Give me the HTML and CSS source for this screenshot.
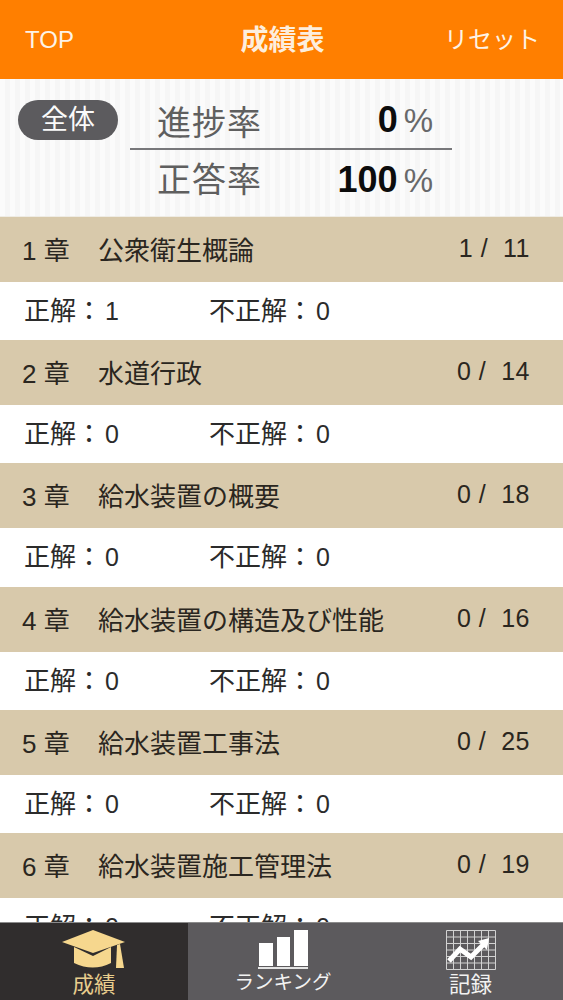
FILE: index.html
```html
<!DOCTYPE html>
<html lang="ja">
<head>
<meta charset="utf-8">
<title>成績表</title>
<link rel="stylesheet" href="styles.css">
</head>
<body>
<div class="app">
  <header class="top">
    <span class="top-left">TOP</span>
    <span class="top-title">成績表</span>
    <span class="top-right">リセット</span>
  </header>
  <section class="summary">
    <div class="pill">全体</div>
    <div class="stats">
      <div class="stat stat-a"><span class="stat-label">進捗率</span><span class="stat-val"><b>0</b><i>%</i></span></div>
      <div class="stat stat-b"><span class="stat-label">正答率</span><span class="stat-val"><b>100</b><i>%</i></span></div>
    </div>
  </section>
  <main class="list">
    <div class="chapter"><span class="no">1 章</span><span class="name">公衆衛生概論</span><span class="count">1 /&nbsp; 11</span></div>
    <div class="result"><span class="ok">正解：<span class="num">1</span></span><span class="ng">不正解：<span class="num">0</span></span></div>
    <div class="chapter"><span class="no">2 章</span><span class="name">水道行政</span><span class="count">0 /&nbsp; 14</span></div>
    <div class="result"><span class="ok">正解：<span class="num">0</span></span><span class="ng">不正解：<span class="num">0</span></span></div>
    <div class="chapter"><span class="no">3 章</span><span class="name">給水装置の概要</span><span class="count">0 /&nbsp; 18</span></div>
    <div class="result"><span class="ok">正解：<span class="num">0</span></span><span class="ng">不正解：<span class="num">0</span></span></div>
    <div class="chapter"><span class="no">4 章</span><span class="name">給水装置の構造及び性能</span><span class="count">0 /&nbsp; 16</span></div>
    <div class="result"><span class="ok">正解：<span class="num">0</span></span><span class="ng">不正解：<span class="num">0</span></span></div>
    <div class="chapter"><span class="no">5 章</span><span class="name">給水装置工事法</span><span class="count">0 /&nbsp; 25</span></div>
    <div class="result"><span class="ok">正解：<span class="num">0</span></span><span class="ng">不正解：<span class="num">0</span></span></div>
    <div class="chapter"><span class="no">6 章</span><span class="name">給水装置施工管理法</span><span class="count">0 /&nbsp; 19</span></div>
    <div class="result"><span class="ok">正解：<span class="num">0</span></span><span class="ng">不正解：<span class="num">0</span></span></div>
  </main>
  <nav class="tabs">
    <div class="tab tab-on">
      <svg class="ic" width="64" height="40" viewBox="0 0 64 40"><path d="M31 0 L63 12 L31 23 L0 12 Z" fill="#f6d78e"/><path d="M12 17 L31 26 L49 17 V33 Q31 42 12 33 Z" fill="#f6d78e"/><path d="M55 15 L58 14 L62 38 L54 38 Z" fill="#f6d78e"/></svg>
      <span>成績</span>
    </div>
    <div class="tab tab-mid">
      <svg class="ic" width="50" height="40" viewBox="0 0 50 40"><path d="M1 13 H15 V36 H1 Z M19 7 H32 V36 H19 Z M36 0 H50 V36 H36 Z" fill="#fff"/><path d="M0 37 H50 V39 H0 Z" fill="#e4e4e4"/></svg>
      <span class="tab-long">ランキング</span>
    </div>
    <div class="tab">
      <svg class="ic" width="50" height="40" viewBox="0 0 50 40"><path d="M.5.5H49.5V39.5H.5ZM.5 7H49.5M.5 13.500H49.5M.5 20H49.5M.5 26.500H49.5M.5 33H49.5M7.500 0V40M14.500 0V40M21.500 0V40M28.500 0V40M35.500 0V40M42.500 0V40" fill="none" stroke="#d2d2d2" stroke-width="1"/><path d="M3 31 L14 19 L25 27 L38 14" fill="none" stroke="#fff" stroke-width="5"/><path d="M32 11 L43 8 L41 20 Z" fill="#fff"/></svg>
      <span>記録</span>
    </div>
  </nav>
</div>
</body>
</html>
```
FILE: styles.css
```css
* { box-sizing: border-box; }
html, body { margin: 0; padding: 0; height: 100%; overflow: hidden; }
body { font-family: "Liberation Sans", "Noto Sans CJK JP", sans-serif; background: #fff; }
.app { display: flex; flex-direction: column; height: 1000px; width: 563px; }

.top { flex: 0 0 79px; background: #ff7f00; color: #fdf3e6; display: grid; grid-template-columns: 1fr auto 1fr; align-items: center; padding: 0 23px 4px 25px; }
.top-left { font-size: 24px; margin-top: 5px; }
.top-title { font-size: 28px; font-weight: 700; color: #fdeedd; }
.top-right { font-size: 24px; justify-self: end; }

.summary { flex: 0 0 138px; display: flex; align-items: flex-start; padding: 21px 0 0 18px; background: repeating-linear-gradient(90deg, #fbfbfb 0 5px, #f6f6f6 5px 10px); border-bottom: 1px solid #efece4; }
.pill { width: 100px; height: 40px; border-radius: 20px; background: #5c5b5e; color: #fafafa; font-size: 27px; line-height: 41px; text-align: center; }
.stats { width: 322px; margin: -10px 0 0 12px; }
.stat { display: flex; justify-content: space-between; align-items: center; padding: 0 19px 0 27px; color: #5f5f5f; }
.stat-a { height: 60px; border-bottom: 2px solid #77777a; padding-top: 2px; }
.stat-b { height: 60px; padding-bottom: 6px; }
.stat-b .stat-val { margin-bottom: -6px; }
.stat-label { font-size: 34px; letter-spacing: 1px; }
.stat-val { display: flex; align-items: baseline; gap: 6px; }
.stat-val b { font-size: 36px; color: #0c0c0c; }
.stat-val i { font-size: 33px; font-style: normal; color: #68686a; }

.list { flex: 1 1 0; min-height: 0; overflow: hidden; }
.chapter { height: 65px; background: #d8c9ab; color: #2a2620; display: flex; align-items: center; padding: 0 33px 2px 22px; font-size: 26px; }
.no { width: 76px; }
.name { flex: 1; }
.count { font-size: 25px; letter-spacing: 0.5px; }
.result { height: 58.2px; background: #fff; color: #2b2b2b; display: flex; align-items: center; padding: 0 0 5px 24px; font-size: 26px; }
.ok { width: 185px; }
.num { margin-left: 3px; font-size: 25px; }

.tabs { flex: 0 0 78px; display: flex; background: #5c5a5d; border-top: 1px solid #8b8b8b; }
.tab { flex: 1 1 0; display: flex; flex-direction: column; align-items: center; color: #f2f2f2; font-size: 21.5px; line-height: 24px; padding-top: 7px; gap: 3px; overflow: hidden; }
.tab-on { background: #302d2d; color: #e8cd8d; flex: 0 0 188px; }
.tab-mid { flex: 0 0 190px; }
.tab-long { font-size: 19.500px; margin-top: -3px; }
.ic { display: block; flex: none; }
```
